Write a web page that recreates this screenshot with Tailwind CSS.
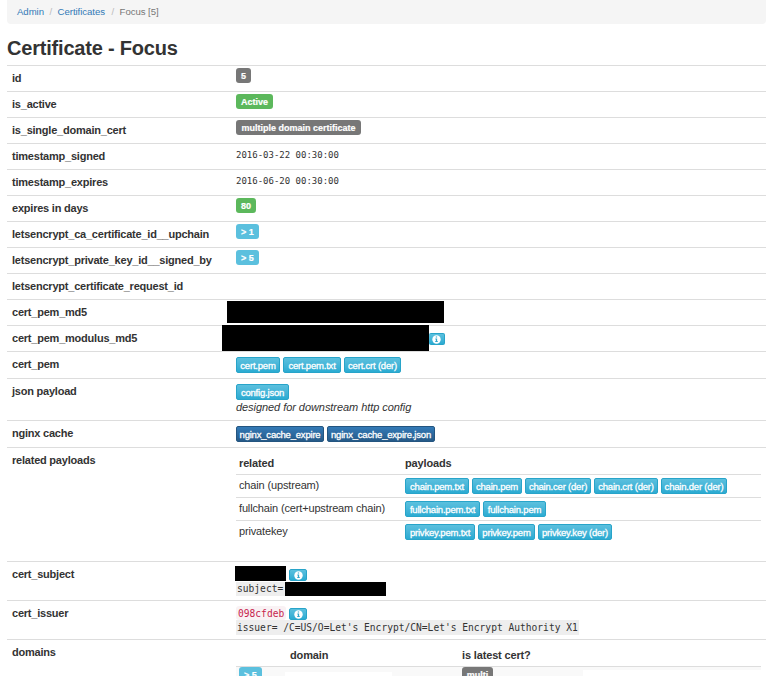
<!DOCTYPE html>
<html lang="en">
<head>
<meta charset="utf-8">
<title>Certificate - Focus</title>
<script src="https://cdn.jsdelivr.net/npm/@tailwindcss/browser@4"></script>
</head>
<body class="h-[676px] overflow-hidden bg-white text-[#333] font-['Liberation_Sans',Arial,sans-serif] text-[11px] leading-4">
<svg class="hidden"><symbol id="info" viewBox="0 0 10 10"><circle cx="5" cy="5" r="4.7" fill="#fff"/><path d="M4.2 1.7h1.5v1.2H4.2zM3.7 4h2v2.8h.7v1H3.6v-1h.7V5h-.6z" fill="#31a5cb"/></symbol></svg>
<nav class="ml-[7px] flex h-6 w-[759px] items-center gap-[5.5px] rounded-b bg-[#f5f5f5] pl-[10px] text-[9.6px] tracking-[-0.05px]">
<a class="text-[#337ab7]">Admin</a><span class="text-[#bbb]">/</span><a class="text-[#337ab7]">Certificates</a><span class="ml-px text-[#bbb]">/</span><span class="text-[#777]">Focus [5]</span>
</nav>
<h1 class="ml-[7px] mt-3 h-[29px] text-[20px] font-bold leading-6 tracking-[-0.2px]">Certificate - Focus</h1>
<main class="ml-[7px] w-[759px] *:flex *:border-t *:border-[#ddd] *:pl-[5px] [&>section>b]:w-[224px] [&>section>b]:shrink-0 [&>section>b]:pt-1 [&>section>b]:tracking-[-0.22px] [&_i]:h-[15px] [&_i]:rounded-[3px] [&_i]:text-center [&_i]:text-[9px] [&_i]:font-bold [&_i]:not-italic [&_i]:leading-4 [&_i]:text-white [&_i]:whitespace-nowrap [&_i]:[-webkit-text-stroke:0.2px_white] [&_button]:h-4 [&_button]:rounded-[2px] [&_button]:border [&_button]:border-[#28a4c9] [&_button]:bg-linear-to-b [&_button]:from-[#5bc0de] [&_button]:to-[#2aabd2] [&_button]:text-[9.5px] [&_button]:leading-[15px] [&_button]:tracking-[-0.2px] [&_button]:text-white [&_button]:whitespace-nowrap [&_button]:[-webkit-text-stroke:0.3px_white]">
<section class="h-[26px]"><b>id</b><i class="mt-0.5 w-[15px] bg-[#777]">5</i></section>
<section class="h-[26px]"><b>is_active</b><i class="mt-0.5 w-[37px] bg-[#5cb85c]">Active</i></section>
<section class="h-[26px]"><b>is_single_domain_cert</b><i class="mt-0.5 w-[125px] bg-[#777]">multiple domain certificate</i></section>
<section class="h-[26px]"><b>timestamp_signed</b><time class="pt-[3px] font-['DejaVu_Sans_Mono',monospace] text-[9px]">2016-03-22 00:30:00</time></section>
<section class="h-[26px]"><b>timestamp_expires</b><time class="pt-[3px] font-['DejaVu_Sans_Mono',monospace] text-[9px]">2016-06-20 00:30:00</time></section>
<section class="h-[26px]"><b>expires in days</b><i class="mt-0.5 w-5 bg-[#5cb85c]">80</i></section>
<section class="h-[26px]"><b>letsencrypt_ca_certificate_id__upchain</b><i class="mt-0.5 w-[23px] bg-[#5bc0de]">&gt; 1</i></section>
<section class="h-[26px]"><b>letsencrypt_private_key_id__signed_by</b><i class="mt-0.5 w-[23px] bg-[#5bc0de]">&gt; 5</i></section>
<section class="h-[26px]"><b>letsencrypt_certificate_request_id</b></section>
<section class="h-[26px]"><b>cert_pem_md5</b><div class="-ml-[9px] mt-px h-[22px] w-[217px] bg-black"></div></section>
<section class="h-[26px]"><b>cert_pem_modulus_md5</b><div class="relative -ml-[14px] -mt-px h-[26px] w-[207px] bg-black"></div><button class="mt-[7px] flex h-3! w-4 items-center justify-center border-l-0!"><svg class="size-[9px]"><use href="#info"/></svg></button></section>
<section class="h-[27px]"><b>cert_pem</b><div class="mt-[5px] flex gap-[3px]"><button class="w-11">cert.pem</button><button class="w-[58px]">cert.pem.txt</button><button class="w-[57px]">cert.crt (der)</button></div></section>
<section class="h-[42px]"><b>json payload</b><div class="pt-[5px]"><button class="block w-[53px]">config.json</button><em class="block leading-[15px] tracking-[-0.06px]">designed for downstream http config</em></div></section>
<section class="h-[27px] [&_button]:border-[#245580]! [&_button]:from-[#337ab7]! [&_button]:to-[#265a88]!"><b>nginx cache</b><div class="mt-[5px] flex gap-[3px]"><button class="w-[88px]">nginx_cache_expire</button><button class="w-[108px]">nginx_cache_expire.json</button></div></section>
<section class="h-[114px]"><b>related payloads</b>
<div class="w-[525px] pt-2 tracking-[-0.15px] *:flex *:pl-[3px] [&>div>span]:w-[166px] [&>div>span]:shrink-0">
<div class="h-[18px] font-bold leading-[15px]"><span>related</span><span>payloads</span></div>
<div class="h-[23px] gap-[3px] border-t border-[#ddd] pt-[3px]"><span class="-mr-[3px] leading-[15px]">chain (upstream)</span><button class="w-16">chain.pem.txt</button><button class="w-[50px]">chain.pem</button><button class="w-[66px]">chain.cer (der)</button><button class="w-16">chain.crt (der)</button><button class="w-[66px]">chain.der (der)</button></div>
<div class="h-[23px] gap-[3px] border-t border-[#ddd] pt-[3px]"><span class="-mr-[3px] leading-[15px]">fullchain (cert+upstream chain)</span><button class="w-[75px]">fullchain.pem.txt</button><button class="w-[63px]">fullchain.pem</button></div>
<div class="h-[23px] gap-[3px] border-t border-[#ddd] pt-[3px]"><span class="-mr-[3px] leading-[15px]">privatekey</span><button class="w-[70px]">privkey.pem.txt</button><button class="w-[57px]">privkey.pem</button><button class="w-[74px]">privkey.key (der)</button></div>
</div></section>
<section class="h-[39px]"><b>cert_subject</b><div class="pt-1">
<div class="-ml-px flex h-4 gap-[3px]"><div class="h-[15px] w-[51px] bg-black"></div><button class="mt-[3px] flex h-3! w-[18px] items-center justify-center"><svg class="size-[9px]"><use href="#info"/></svg></button></div>
<div class="flex h-[14px]"><code class="w-[49px] bg-[#eee] pl-px font-['DejaVu_Sans_Mono',monospace] text-[9.6px] leading-[14px]">subject=</code><div class="h-[14px] w-[101px] bg-black"></div></div></div></section>
<section class="h-[39px]"><b>cert_issuer</b><div class="pt-[5px]">
<div class="flex h-[14px] gap-[3px]"><code class="w-[50px] rounded-[3px] bg-[#f9f2f4] pl-0.5 font-['DejaVu_Sans_Mono',monospace] text-[9.6px] leading-[15px] text-[#c7254e]">098cfdeb</code><button class="mt-0.5 flex h-3! w-[18px] items-center justify-center"><svg class="size-[9px]"><use href="#info"/></svg></button></div>
<code class="block h-[15px] w-[343px] whitespace-pre bg-[#eee] pl-px font-['DejaVu_Sans_Mono',monospace] text-[9.6px] leading-[15px]">issuer= /C=US/O=Let's Encrypt/CN=Let's Encrypt Authority X1</code></div></section>
<section class="h-[60px]"><b>domains</b><div class="w-[525px] pt-2">
<div class="flex h-[18px] pl-[54px] font-bold leading-[15px] tracking-[-0.15px]"><span class="w-[172px]">domain</span><span>is latest cert?</span></div>
<div class="relative flex h-8 border-t border-[#ddd] bg-[#f9f9f9] pl-[3px]"><i class="relative z-10 w-[23px] bg-[#5bc0de]">&gt; 5</i><i class="relative z-10 ml-[200px] w-[31px] bg-[#777]">multi</i><div class="absolute left-[49px] top-[5px] h-7 w-[107px] bg-white"></div><div class="absolute left-[347px] top-[3px] h-7 w-[178px] bg-white"></div></div>
</div></section>
</main>
</body>
</html>
